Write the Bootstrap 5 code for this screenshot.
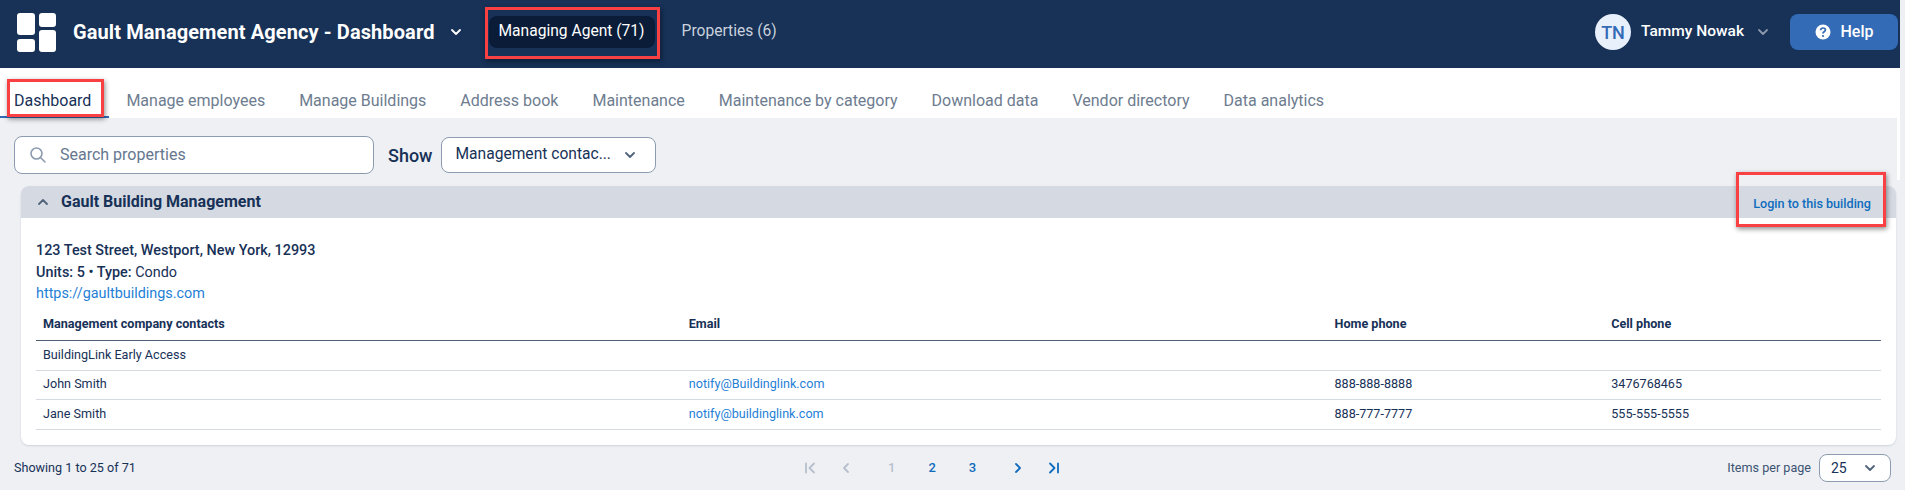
<!DOCTYPE html>
<html lang="en">
<head>
  <meta charset="UTF-8">
  <title>Gault Management Agency - Dashboard</title>
  <meta name="viewport" content="width=device-width, initial-scale=1">
  <link href="https://cdn.jsdelivr.net/npm/bootstrap@5.3.3/dist/css/bootstrap.min.css" rel="stylesheet">
  <script src="https://cdn.jsdelivr.net/npm/bootstrap@5.3.3/dist/js/bootstrap.bundle.min.js"></script>

  <style>
    html, body {
      height: 490px;
      overflow: hidden;
    }

    body {
      font-family: Roboto, "Liberation Sans", sans-serif;
      background-color: #eef0f4;
      color: #173157;
      font-size: 14px;
    }

    .app-shell {
      width: 1900px;
      height: 490px;
      background: linear-gradient(#fff 180px, #eef0f4 180px);
      position: relative;
    }

    /* Top bar */
    .top-bar {
      height: 68px;
      background-color: #173157;
      padding: 0 2px 4px 17px;
      color: #fff;
    }

    .brand-name {
      font-size: 20px;
      font-weight: 700;
      letter-spacing: .1px;
      margin-left: 17px;
      margin-right: 15px;
    }

    .chev {
      width: 12px;
      height: 12px;
      fill: none;
      stroke: currentColor;
      stroke-width: 1.8;
      stroke-linecap: round;
      stroke-linejoin: round;
      flex-shrink: 0;
    }

    .top-link {
      height: 32px;
      padding: 0 10px;
      margin-left: 27px;
      border-radius: 8px;
      color: #fff;
      font-size: 15.6px;
      text-decoration: none;
      display: flex;
      align-items: center;
    }

    .top-link.is-current {
      background-color: #0a1c38;
    }

    .top-link.is-muted {
      color: #c9d1dd;
      margin-left: 17px;
    }

    .user-mono {
      width: 36px;
      height: 36px;
      border-radius: 50%;
      background-color: #e8f0fc;
      color: #336bb6;
      font-size: 18px;
      font-weight: 500;
    }

    .user-name {
      font-size: 15.5px;
      font-weight: 500;
      margin: 0 13px 0 10px;
    }

    .help-btn {
      width: 108px;
      height: 36px;
      margin-left: 21px;
      background-color: #336bb6;
      border-radius: 8px;
      color: #fff;
      font-size: 16px;
      font-weight: 500;
      border: 0;
      gap: 10px;
    }

    /* Tabs */
    .tab-row {
      height: 50px;
      width: 1897px;
    }

    .tab-item {
      height: 50px;
      padding: 0 17px 3px;
      font-size: 16px;
      color: #6d7c8f;
      text-decoration: none;
      display: flex;
      align-items: flex-end;
      border-bottom: 2px solid transparent;
    }

    .tab-item.is-current {
      color: #173157;
      padding: 0 18px 3px 14px;
      border-bottom-color: #336bb6;
    }

    /* Main panel */
    .main-panel {
      width: 1897px;
      height: 372px;
      background-color: #eef0f4;
      padding: 18px 0 0 14px;
    }

    .search-box {
      width: 360px;
      height: 38px;
      padding: 0 14px;
      background-color: #fff;
      border: 1px solid #8c9bb0;
      border-radius: 8px;
      gap: 13px;
    }

    .search-box input {
      border: 0;
      outline: 0;
      padding: 0;
      width: 100%;
      font-size: 16px;
      color: #173157;
    }

    .search-box input::placeholder {
      color: #65778f;
      opacity: 1;
    }

    .show-label {
      font-size: 18px;
      font-weight: 500;
      margin: 0 9px 0 14px;
    }

    .pick-box {
      background-color: #fff;
      border: 1px solid #8c9bb0;
      border-radius: 8px;
      color: #173157;
    }

    .pick-show {
      width: 215px;
      height: 36px;
      padding: 0 19px 0 13px;
      font-size: 15.6px;
    }

    .pick-size {
      width: 72px;
      height: 28px;
      padding: 0 14px 0 11px;
      font-size: 14px;
    }

    .pick-box .chev {
      color: #51637b;
    }

    /* Building card */
    .building-card {
      width: 1875px;
      height: 259px;
      margin: 12px 0 0 7px;
      background-color: #fff;
      border-radius: 8px;
      box-shadow: 0 1px 2px rgba(23, 49, 87, .15);
      overflow: hidden;
    }

    .building-head {
      height: 32px;
      padding: 0 25px 0 16px;
      background-color: #d5dae2;
    }

    .building-head .chev {
      color: #51637b;
    }

    .building-title {
      font-size: 16px;
      font-weight: 700;
      margin-left: 12px;
    }

    .building-login {
      color: #0f6cbd;
      font-size: 12.6px;
      font-weight: 500;
      text-decoration: none;
      padding-top: 4px;
    }

    .building-body {
      padding: 22px 15px 0;
    }

    .address-block {
      font-size: 14.4px;
      line-height: 21.5px;
      color: #173157;
    }

    .address-block a,
    .contact-grid a {
      color: #1f7fd6;
      text-decoration: none;
    }

    .contact-grid {
      table-layout: fixed;
      width: 100%;
      margin-top: 5px;
      font-size: 12.6px;
      color: #173157;
    }

    .col-wide {
      width: 35%;
    }

    .col-narrow {
      width: 15%;
    }

    .contact-grid th {
      height: 31px;
      padding: 0 7px;
      font-weight: 700;
      border-bottom: 1px solid #4e5f75;
    }

    .contact-grid td {
      height: 29.5px;
      padding: 0 7px;
      border-bottom: 1px solid #d5dae2;
    }

    /* Footer */
    .pager-row {
      width: 1877px;
      height: 36px;
      margin-top: 5px;
      font-size: 12.6px;
    }

    .pager-count {
      width: 790px;
    }

    .pager-nums {
      gap: 36px;
      color: #0f6cbd;
      font-size: 13px;
      font-weight: 500;
    }

    .pager-arrows {
      gap: 24px;
    }

    .pager-pages {
      gap: 33px;
    }

    .pager-nums svg {
      display: block;
      width: 12px;
      height: 12px;
      fill: none;
      stroke: currentColor;
      stroke-width: 1.8;
      stroke-linecap: round;
      stroke-linejoin: round;
    }

    .pager-off {
      color: #b6c0cc;
    }

    .per-page-label {
      color: #3c5373;
      margin-right: 8px;
    }

    /* Red annotation boxes drawn over the screenshot */
    .mark-box {
      position: absolute;
      border: 3px solid #f94144;
      box-shadow: 1px 2px 5px rgba(0, 0, 0, .45);
      pointer-events: none;
    }

    .mark-agent {
      left: 485px;
      top: 7px;
      width: 175px;
      height: 52px;
    }

    .mark-dash {
      left: 7px;
      top: 79px;
      width: 97px;
      height: 38px;
    }

    .mark-login {
      left: 1736px;
      top: 172px;
      width: 150px;
      height: 55px;
    }
  </style>
</head>
<body>

  <div class="app-shell">

    <!-- Top bar -->
    <header class="top-bar d-flex align-items-center">
      <svg width="39" height="39" viewBox="0 0 39 39" fill="#fff">
        <rect x="0" y="0" width="18" height="22" rx="3"/>
        <rect x="22" y="0" width="17" height="14" rx="3"/>
        <rect x="0" y="26" width="18" height="13" rx="3"/>
        <rect x="22" y="17" width="17" height="22" rx="3"/>
      </svg>
      <span class="brand-name">Gault Management Agency - Dashboard</span>
      <svg class="chev" viewBox="0 0 12 12"><path d="M2 4l4 4 4-4"/></svg>
      <a class="top-link is-current" href="#">Managing Agent (71)</a>
      <a class="top-link is-muted" href="#">Properties (6)</a>

      <div class="d-flex align-items-center ms-auto">
        <span class="user-mono d-flex align-items-center justify-content-center">TN</span>
        <span class="user-name">Tammy Nowak</span>
        <svg class="chev text-white-50" viewBox="0 0 12 12"><path d="M2 4l4 4 4-4"/></svg>
        <button class="help-btn btn d-flex align-items-center justify-content-center" type="button">
          <svg width="16" height="16" viewBox="0 0 16 16">
            <circle cx="8" cy="8" r="7.5" fill="#fff"/>
            <path d="M5.6 6.2c0-1.4 1.1-2.2 2.4-2.2s2.4.8 2.4 2c0 1.8-2.4 1.8-2.4 3.4" fill="none" stroke="#336bb6" stroke-width="1.7"/>
            <circle cx="8" cy="12" r="1.1" fill="#336bb6"/>
          </svg>
          Help
        </button>
      </div>
    </header>

    <!-- Tabs -->
    <nav class="tab-row d-flex">
      <a class="tab-item is-current" href="#">Dashboard</a>
      <a class="tab-item" href="#">Manage employees</a>
      <a class="tab-item" href="#">Manage Buildings</a>
      <a class="tab-item" href="#">Address book</a>
      <a class="tab-item" href="#">Maintenance</a>
      <a class="tab-item" href="#">Maintenance by category</a>
      <a class="tab-item" href="#">Download data</a>
      <a class="tab-item" href="#">Vendor directory</a>
      <a class="tab-item" href="#">Data analytics</a>
    </nav>

    <main class="main-panel">
      <!-- Filters -->
      <div class="d-flex align-items-center">
        <label class="search-box d-flex align-items-center">
          <svg width="18" height="18" viewBox="0 0 18 18" fill="none" stroke="#8c9bb0" stroke-width="1.6" stroke-linecap="round" class="flex-shrink-0">
            <circle cx="7.5" cy="7.5" r="5.5"/>
            <path d="M11.7 11.7L16 16"/>
          </svg>
          <input type="text" placeholder="Search properties">
        </label>
        <span class="show-label">Show</span>
        <div class="pick-box pick-show d-flex align-items-center justify-content-between">
          <span>Management contac...</span>
          <svg class="chev" viewBox="0 0 12 12"><path d="M2 4l4 4 4-4"/></svg>
        </div>
      </div>

      <!-- Building -->
      <section class="building-card">
        <div class="building-head d-flex align-items-center">
          <svg class="chev" viewBox="0 0 12 12"><path d="M2 8l4-4 4 4"/></svg>
          <span class="building-title">Gault Building Management</span>
          <a class="building-login ms-auto" href="#">Login to this building</a>
        </div>
        <div class="building-body">
          <div class="address-block">
            <div class="fw-medium">123 Test Street, Westport, New York, 12993</div>
            <div><span class="fw-medium">Units: 5 • Type:</span> Condo</div>
            <a href="#">https://gaultbuildings.com</a>
          </div>
          <table class="contact-grid">
            <colgroup>
              <col class="col-wide"><col class="col-wide"><col class="col-narrow"><col class="col-narrow">
            </colgroup>
            <thead>
              <tr>
                <th>Management company contacts</th>
                <th>Email</th>
                <th>Home phone</th>
                <th>Cell phone</th>
              </tr>
            </thead>
            <tbody>
              <tr><td>BuildingLink Early Access</td><td></td><td></td><td></td></tr>
              <tr><td>John Smith</td><td><a href="#">notify@Buildinglink.com</a></td><td>888-888-8888</td><td>3476768465</td></tr>
              <tr><td>Jane Smith</td><td><a href="#">notify@buildinglink.com</a></td><td>888-777-7777</td><td>555-555-5555</td></tr>
            </tbody>
          </table>
        </div>
      </section>

      <!-- Paging -->
      <div class="pager-row d-flex align-items-center">
        <span class="pager-count">Showing 1 to 25 of 71</span>
        <div class="pager-nums d-flex align-items-center">
          <div class="pager-arrows pager-off d-flex align-items-center">
            <svg viewBox="0 0 12 12"><path d="M2 1.5v9M10 1.5L5.5 6l4.5 4.5"/></svg>
            <svg viewBox="0 0 12 12"><path d="M8 2L4 6l4 4"/></svg>
          </div>
          <div class="pager-pages d-flex align-items-center">
            <span class="pager-off">1</span>
            <span>2</span>
            <span>3</span>
          </div>
          <div class="pager-arrows d-flex align-items-center">
            <svg viewBox="0 0 12 12"><path d="M4 2l4 4-4 4"/></svg>
            <svg viewBox="0 0 12 12"><path d="M2 1.5L6.5 6 2 10.5M10 1.5v9"/></svg>
          </div>
        </div>
        <div class="d-flex align-items-center ms-auto">
          <span class="per-page-label">Items per page</span>
          <div class="pick-box pick-size d-flex align-items-center justify-content-between">
            <span>25</span>
            <svg class="chev" viewBox="0 0 12 12"><path d="M2 4l4 4 4-4"/></svg>
          </div>
        </div>
      </div>
    </main>

    <!-- Red annotation boxes -->
    <div class="mark-box mark-agent"></div>
    <div class="mark-box mark-dash"></div>
    <div class="mark-box mark-login"></div>
  </div>

</body>
</html>
